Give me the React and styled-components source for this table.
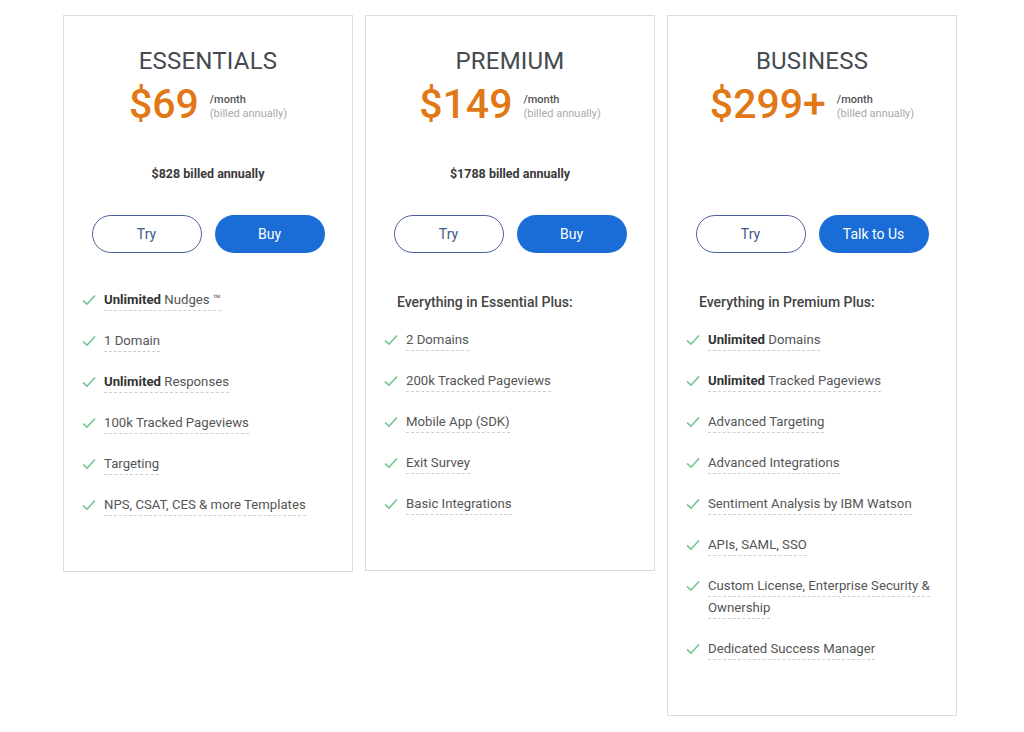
import React from "react";
import styled, { createGlobalStyle } from "styled-components";

const plans = [
  {
    name: "ESSENTIALS",
    price: "$69",
    annual: "$828 billed annually",
    cta: "Buy",
    features: [
      { bold: "Unlimited", text: " Nudges ™" },
      { text: "1 Domain" },
      { bold: "Unlimited", text: " Responses" },
      { text: "100k Tracked Pageviews" },
      { text: "Targeting" },
      { text: "NPS, CSAT, CES & more Templates" }
    ]
  },
  {
    name: "PREMIUM",
    price: "$149",
    annual: "$1788 billed annually",
    cta: "Buy",
    intro: "Everything in Essential Plus:",
    features: [
      { text: "2 Domains" },
      { text: "200k Tracked Pageviews" },
      { text: "Mobile App (SDK)" },
      { text: "Exit Survey" },
      { text: "Basic Integrations" }
    ]
  },
  {
    name: "BUSINESS",
    price: "$299+",
    annual: "",
    cta: "Talk to Us",
    intro: "Everything in Premium Plus:",
    features: [
      { bold: "Unlimited", text: " Domains" },
      { bold: "Unlimited", text: " Tracked Pageviews" },
      { text: "Advanced Targeting" },
      { text: "Advanced Integrations" },
      { text: "Sentiment Analysis by IBM Watson" },
      { text: "APIs, SAML, SSO" },
      { text: "Custom License, Enterprise Security & Ownership" },
      { text: "Dedicated Success Manager" }
    ]
  }
];

function Check() {
  return (
    <CheckIcon viewBox="0 0 14 12" width="14" height="12">
      <path d="M1 6.5 L5 10.2 L13 1.5" fill="none" stroke="#6fc48e" strokeWidth="1.6" />
    </CheckIcon>
  );
}

export default function App() {
  return (
    <>
      <GlobalStyle />
      <Page>
        {plans.map(plan => (
          <Card key={plan.name}>
            <Title>{plan.name}</Title>
            <PriceRow>
              <Price>{plan.price}</Price>
              <Per>
                <Month>/month</Month>
                <Billed>(billed annually)</Billed>
              </Per>
            </PriceRow>
            <Annual>{plan.annual}</Annual>
            <Buttons>
              <TryButton>Try</TryButton>
              <BuyButton>{plan.cta}</BuyButton>
            </Buttons>
            <Features>
              {plan.intro && <Intro>{plan.intro}</Intro>}
              {plan.features.map((f, i) => (
                <Feature key={i}>
                  <Check />
                  <FeatureText>
                    <Dashed>
                      {f.bold && <strong>{f.bold}</strong>}
                      {f.text}
                    </Dashed>
                  </FeatureText>
                </Feature>
              ))}
            </Features>
          </Card>
        ))}
      </Page>
    </>
  );
}

const GlobalStyle = createGlobalStyle`
  body {
    margin: 0;
    background: #fff;
    font-family: Roboto, "Liberation Sans", sans-serif;
  }
`;

const Page = styled.div`
  display: flex;
  align-items: flex-start;
  gap: 12px;
  padding: 15px 0 0 63px;
`;

const Card = styled.div`
  box-sizing: border-box;
  width: 290px;
  border: 1px solid #dcdcdc;
  padding: 31px 0 55px;
  display: flex;
  flex-direction: column;
`;

const Title = styled.div`
  text-align: center;
  font-size: 24px;
  line-height: 28px;
  color: #444b52;
  letter-spacing: 0.2px;
`;

const PriceRow = styled.div`
  display: flex;
  justify-content: center;
  align-items: flex-start;
  gap: 11px;
  margin-top: 5px;
`;

const Price = styled.div`
  font-size: 41px;
  line-height: 48px;
  font-weight: 500;
  color: #e27716;
`;

const Per = styled.div`
  display: flex;
  flex-direction: column;
  font-size: 11px;
  line-height: 14px;
  margin-top: 13px;
`;

const Month = styled.span`
  color: #555;
  font-weight: 500;
`;

const Billed = styled.span`
  color: #aaa;
`;

const Annual = styled.div`
  height: 18px;
  margin-top: 37px;
  text-align: center;
  font-size: 12.5px;
  line-height: 18px;
  font-weight: 700;
  color: #3a3a3a;
`;

const Buttons = styled.div`
  display: flex;
  justify-content: center;
  gap: 13px;
  margin-top: 32px;
`;

const BaseButton = styled.button`
  box-sizing: border-box;
  width: 110px;
  height: 38px;
  border-radius: 19px;
  font-family: Roboto, "Liberation Sans", sans-serif;
  font-size: 14px;
  cursor: pointer;
`;

const TryButton = styled(BaseButton)`
  background: #fff;
  border: 1px solid #4b6399;
  color: #3d5a8c;
`;

const BuyButton = styled(BaseButton)`
  background: #1a6dd6;
  border: none;
  color: #fff;
`;

const Features = styled.div`
  display: flex;
  flex-direction: column;
  gap: 19px;
  padding: 36px 20px 0 18px;
`;

const Intro = styled.div`
  padding-left: 13px;
  font-size: 14px;
  line-height: 22px;
  font-weight: 500;
  color: #444;
  margin-top: 2px;
  margin-bottom: -3px;
`;

const Feature = styled.div`
  display: flex;
  align-items: flex-start;
  gap: 8px;
`;

const CheckIcon = styled.svg`
  flex: none;
  margin-top: 5px;
`;

const FeatureText = styled.div`
  font-size: 13.2px;
  line-height: 22px;
  color: #555;

  strong {
    font-weight: 700;
    color: #333;
  }
`;

const Dashed = styled.span`
  padding-bottom: 3px;
  border-bottom: 1px dashed #cfcfcf;
`;
